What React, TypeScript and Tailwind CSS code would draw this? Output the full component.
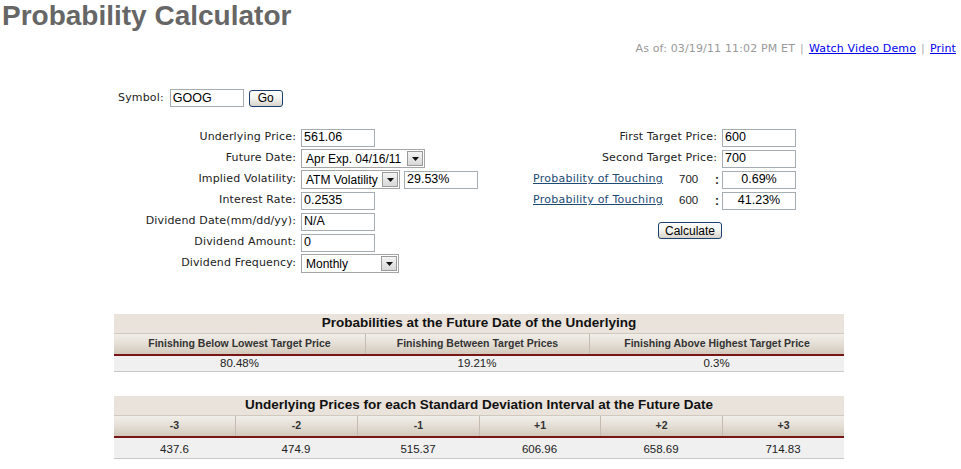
import React from "react";

const verdana = { fontFamily: '"DejaVu Sans", Verdana, sans-serif', letterSpacing: "0.15px" };
const arial = { fontFamily: '"Liberation Sans", Arial, sans-serif' };

function TextBox({ value, w = "w-[74px]", center = false }: { value: string; w?: string; center?: boolean }) {
  return (
    <div
      className={`${w} h-[18px] border border-[#a5acb2] bg-white flex items-center text-[12.5px] text-black leading-none whitespace-nowrap ${center ? "justify-center" : "pl-[2px]"}`}
      style={arial}
    >
      {value}
    </div>
  );
}

function Select({ value, w }: { value: string; w: string }) {
  return (
    <div
      className={`${w} h-[19px] border border-[#a5a5a5] bg-white flex items-center justify-between text-[12px] text-black leading-none pl-[4px] pr-[1px] whitespace-nowrap`}
      style={arial}
    >
      <span>{value}</span>
      <span className="w-[16px] h-[15px] shrink-0 border border-[#9a9a9a] bg-gradient-to-b from-[#f4f4f4] to-[#d8d8d8] flex items-center justify-center">
        <svg width="7" height="4" viewBox="0 0 7 4"><path d="M0 0h7L3.5 4z" fill="#111" /></svg>
      </span>
    </div>
  );
}

function XPButton({ label, w }: { label: string; w: string }) {
  return (
    <div
      className={`${w} h-[17px] rounded-[3px] border border-[#1c3f6e] bg-gradient-to-b from-[#ffffff] via-[#f3f3ef] to-[#d6d3cb] flex items-center justify-center text-[12px] text-black leading-none`}
      style={arial}
    >
      {label}
    </div>
  );
}

function LeftRow({ label, children }: { label: string; children: React.ReactNode }) {
  return (
    <div className="h-[21px] flex items-center">
      <div className="w-[297px] text-right text-[11px] text-[#222] pr-[1px] whitespace-nowrap" style={verdana}>{label}</div>
      <div className="ml-[4px] flex items-center gap-[4px]">{children}</div>
    </div>
  );
}

function RightRow({ label, children }: { label: string; children: React.ReactNode }) {
  return (
    <div className="h-[21px] flex items-center">
      <div className="w-[218px] text-right text-[11px] text-[#222] pr-[1px] whitespace-nowrap" style={verdana}>{label}</div>
      <div className="ml-[4px]">{children}</div>
    </div>
  );
}

function TouchRow({ price, value }: { price: string; value: string }) {
  return (
    <div className="h-[21px] flex items-center pl-[33px]">
      <a className="w-[146px] text-[11px] text-[#1d4a72] underline whitespace-nowrap" style={{ ...verdana, letterSpacing: "0.25px" }}>Probability of Touching</a>
      <span className="w-[36px] text-[11.5px] text-[#222]" style={arial}>{price}</span>
      <span className="w-[7px] text-[12px] font-bold text-[#222]" style={arial}>:</span>
      <TextBox value={value} w="w-[74px]" center />
    </div>
  );
}

function DataTable({ title, cols, widths, values, dataH, valuePad }: { title: string; cols: string[]; widths: string[]; values: string[]; dataH: string; valuePad: string }) {
  return (
    <div className="ml-[114px] w-[730px]">
      <div className="h-[20px] bg-[#e9e3dc] flex items-center justify-center text-[13.5px] font-bold text-[#111] border-b border-[#cfc9c0] whitespace-nowrap" style={arial}>
        {title}
      </div>
      <div className="flex h-[22px] bg-gradient-to-b from-[#f1eee9] via-[#e4ded5] to-[#d2c9bc] border-b-2 border-[#7a1515]">
        {cols.map((c, i) => (
          <div
            key={i}
            className={`${widths[i]} flex items-center justify-center text-[10.5px] font-bold text-[#333] whitespace-nowrap ${i > 0 ? "border-l border-[#c4bcb0]" : ""}`}
            style={arial}
          >
            {c}
          </div>
        ))}
      </div>
      <div className={`flex ${dataH} bg-[#f0f0f0] border-b border-[#c8c8c8]`}>
        {values.map((v, i) => (
          <div key={i} className={`${widths[i]} flex items-center justify-center text-[11.5px] text-[#222] ${valuePad}`} style={arial}>
            {v}
          </div>
        ))}
      </div>
    </div>
  );
}

export default function App() {
  return (
    <div className="w-[961px] h-[469px] bg-white overflow-hidden">
      <div className="h-[32px] leading-[32px] pl-[2px] text-[28px] font-bold text-[#666] whitespace-nowrap" style={arial}>
        Probability Calculator
      </div>
      <div className="mt-[10px] h-[14px] leading-[14px] flex justify-end pr-[5px] text-[11px] text-[#999] whitespace-nowrap" style={verdana}>
        <span>As of: 03/19/11 11:02 PM ET</span>
        <span className="mx-[5px] text-[#aaa]">|</span>
        <a className="text-[#0000ee] underline">Watch Video Demo</a>
        <span className="mx-[5px] text-[#aaa]">|</span>
        <a className="text-[#0000ee] underline">Print</a>
      </div>

      <div className="mt-[33px] h-[18px] flex items-center pl-[118px]">
        <span className="text-[11px] text-[#222]" style={verdana}>Symbol:</span>
        <div className="ml-[6px]"><TextBox value="GOOG" w="w-[74px]" /></div>
        <div className="ml-[5px]"><XPButton label="Go" w="w-[34px]" /></div>
      </div>

      <div className="mt-[20px] flex">
        <div className="w-[500px]">
          <LeftRow label="Underlying Price:"><TextBox value="561.06" /></LeftRow>
          <LeftRow label="Future Date:"><Select value="Apr Exp. 04/16/11" w="w-[124px]" /></LeftRow>
          <LeftRow label="Implied Volatility:">
            <Select value="ATM Volatility" w="w-[99px]" />
            <TextBox value="29.53%" w="w-[74px]" />
          </LeftRow>
          <LeftRow label="Interest Rate:"><TextBox value="0.2535" /></LeftRow>
          <LeftRow label="Dividend Date(mm/dd/yy):"><TextBox value="N/A" /></LeftRow>
          <LeftRow label="Dividend Amount:"><TextBox value="0" /></LeftRow>
          <LeftRow label="Dividend Frequency:"><Select value="Monthly" w="w-[98px]" /></LeftRow>
        </div>
        <div className="w-[320px]">
          <RightRow label="First Target Price:"><TextBox value="600" /></RightRow>
          <RightRow label="Second Target Price:"><TextBox value="700" /></RightRow>
          <TouchRow price="700" value="0.69%" />
          <TouchRow price="600" value="41.23%" />
          <div className="mt-[11px] pl-[158px]"><XPButton label="Calculate" w="w-[64px]" /></div>
        </div>
      </div>

      <div className="mt-[40px]">
        <DataTable
          title="Probabilities at the Future Date of the Underlying"
          cols={["Finishing Below Lowest Target Price", "Finishing Between Target Prices", "Finishing Above Highest Target Price"]}
          widths={["w-[251px]", "w-[224px]", "w-[255px]"]}
          values={["80.48%", "19.21%", "0.3%"]}
          dataH="h-[16px]"
          valuePad=""
        />
      </div>
      <div className="mt-[24px]">
        <DataTable
          title="Underlying Prices for each Standard Deviation Interval at the Future Date"
          cols={["-3", "-2", "-1", "+1", "+2", "+3"]}
          widths={["w-[121px]", "w-[122px]", "w-[122px]", "w-[121px]", "w-[122px]", "w-[122px]"]}
          values={["437.6", "474.9", "515.37", "606.96", "658.69", "714.83"]}
          dataH="h-[21px]"
          valuePad="pt-[3px]"
        />
      </div>
    </div>
  );
}
